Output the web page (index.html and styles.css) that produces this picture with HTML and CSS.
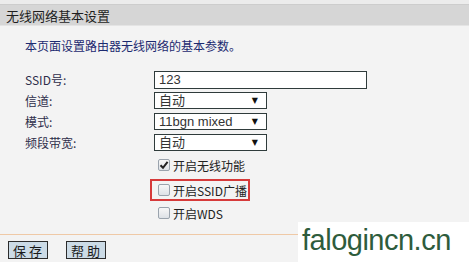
FILE: index.html
```html
<!DOCTYPE html>
<html lang="zh-CN">
<head>
  <meta charset="UTF-8">
  <title>无线网络基本设置</title>
  <link rel="stylesheet" href="styles.css">
</head>
<body>
  <div class="top-strip"></div>
  <header class="title-bar">无线网络基本设置</header>

  <section class="content">
    <p class="desc">本页面设置路由器无线网络的基本参数。</p>

    <div class="form-grid">
      <label>SSID号:</label>
      <div class="field"><div class="text-input">123</div></div>

      <label>信道:</label>
      <div class="field"><div class="select">自动<span class="arrow">▼</span></div></div>

      <label>模式:</label>
      <div class="field"><div class="select">11bgn mixed<span class="arrow">▼</span></div></div>

      <label>频段带宽:</label>
      <div class="field"><div class="select">自动<span class="arrow">▼</span></div></div>
    </div>

    <div class="checks">
      <div class="check-row">
        <span class="box">
          <svg width="10" height="10" viewBox="0 0 10 10"><path d="M1.5 5.2 L4 7.8 L8.6 1.8" fill="none" stroke="#222" stroke-width="2"/></svg>
        </span>
        开启无线功能
      </div>
      <div class="check-row marked">
        <span class="box"></span>
        开启SSID广播
      </div>
      <div class="check-row">
        <span class="box"></span>
        开启WDS
      </div>
    </div>
  </section>

  <footer class="actions">
    <button class="btn">保存</button>
    <button class="btn">帮助</button>
  </footer>

  <div class="watermark">falogincn.cn</div>
</body>
</html>
```

FILE: styles.css
```css
* {
  box-sizing: border-box;
  margin: 0;
  padding: 0;
}

body {
  width: 469px;
  height: 262px;
  overflow: hidden;
  position: relative;
  background: #f3f3f3;
  font-family: "Noto Sans CJK SC", "DejaVu Sans", sans-serif;
  font-size: 12px;
  color: #2a2a2a;
}

.top-strip {
  height: 4px;
  background: #ececec;
}

.title-bar {
  height: 22px;
  line-height: 21px;
  padding-left: 6px;
  background: #d6d6d6;
  border-top: 1px solid #cdcdcd;
  border-bottom: 1px solid #e4e4e4;
  font-size: 13px;
  color: #1e1e1e;
}

.content {
  padding: 10px 0 0 25px;
}

.desc {
  height: 20px;
  line-height: 20px;
  font-size: 12px;
  color: #1c2a70;
}

.form-grid {
  margin-top: 13px;
  display: grid;
  grid-template-columns: 129px auto;
  grid-auto-rows: 21px;
  align-items: center;
}

.form-grid label {
  color: #2e2e4a;
}

.text-input {
  width: 213px;
  height: 18px;
  line-height: 16px;
  padding-left: 4px;
  border: 1px solid #2f3b3b;
  background: #fff;
  font-family: "Liberation Sans", "Noto Sans CJK SC", sans-serif;
  font-size: 13px;
  color: #333;
}

.select {
  position: relative;
  width: 113px;
  height: 17px;
  line-height: 15px;
  padding-left: 4px;
  border: 1px solid #2f3b3b;
  background: #fff;
  font-family: "Liberation Sans", "Noto Sans CJK SC", sans-serif;
  font-size: 13px;
  color: #333;
}

.arrow {
  position: absolute;
  right: 8px;
  top: 0;
  font-family: "DejaVu Sans", sans-serif;
  font-size: 8px;
  color: #111;
}

.checks {
  margin-left: 128px;
  display: flex;
  flex-direction: column;
}

.check-row {
  height: 24px;
  display: flex;
  align-items: center;
  gap: 3px;
  padding-left: 5px;
  color: #222;
}

.check-row.marked {
  width: 100px;
  margin-left: -3px;
  padding-left: 6px;
  height: 22px;
  margin-top: 2px;
  border: 2px solid #d63a3a;
}

.box {
  width: 12px;
  height: 12px;
  display: flex;
  align-items: center;
  justify-content: center;
  border: 1px solid #9aa3ad;
  border-radius: 2px;
  background: linear-gradient(#f7f7f7, #dde1e6);
}

.actions {
  position: absolute;
  left: 0;
  top: 234px;
  width: 469px;
  border-top: 1px solid #efc9a6;
  padding: 6px 0 0 8px;
  display: flex;
  gap: 18px;
}

.btn {
  height: 18px;
  padding: 0 2px 0 4px;
  background: #ccdbe6;
  border: 1px solid #2c2c2c;
  font-family: "Noto Sans CJK SC", sans-serif;
  font-size: 13px;
  line-height: 15px;
  letter-spacing: 3px;
  color: #1a1a1a;
}

.watermark {
  position: absolute;
  left: 298px;
  top: 222px;
  width: 171px;
  height: 40px;
  padding-left: 4px;
  background: #fff;
  font-family: "Liberation Sans", sans-serif;
  font-size: 29px;
  line-height: 36px;
  letter-spacing: -0.5px;
  color: #2e5c3c;
}
```
